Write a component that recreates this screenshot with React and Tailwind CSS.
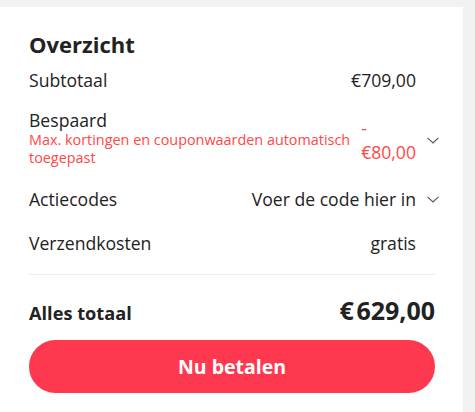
const font = { fontFamily: '"Open Sans", "Noto Sans", sans-serif' };

function Chevron() {
  return (
    <svg width="12" height="7" viewBox="0 0 12 7" fill="none" className="shrink-0 ml-[11px]">
      <path d="M0.5 0.8l5.5 5.2 5.5-5.2" stroke="#555" strokeWidth="1.1" />
    </svg>
  );
}

function Row({ label, value, chevron }) {
  return (
    <div className="flex items-center justify-between text-[17.6px] leading-[24px] text-[#222]">
      <span>{label}</span>
      <div className="flex items-center">
        <span>{value}</span>
        <span className="w-[19px] flex">{chevron && <Chevron />}</span>
      </div>
    </div>
  );
}

export default function App() {
  return (
    <div className="min-h-[412px] bg-[#f2f2f2] pt-[7px] pr-[12px]" style={font}>
      <div className="bg-white min-h-[405px] pl-[29px] pr-[28px] pt-[23px]">
        <h2 className="text-[22px] font-bold text-[#222] leading-[28px]">Overzicht</h2>

        <div className="mt-[10px]">
          <Row label="Subtotaal" value="€709,00" />
        </div>

        <div className="mt-[17px] flex items-start justify-between">
          <div className="flex-1 min-w-0">
            <div className="text-[17.6px] text-[#222] leading-[22px]">Bespaard</div>
            <div className="text-[14.4px] text-[#ff4747] leading-[18px]">
              Max. kortingen en couponwaarden automatisch toegepast
            </div>
          </div>
          <div className="flex items-center mt-[7px] shrink-0">
            <div className="text-[17.6px] text-[#ff4747] leading-[24px]">
              <div>-</div>
              <div>€80,00</div>
            </div>
            <span className="w-[19px] flex">
              <Chevron />
            </span>
          </div>
        </div>

        <div className="mt-[20px]">
          <Row label="Actiecodes" value="Voer de code hier in" chevron />
        </div>
        <div className="mt-[20px]">
          <Row label="Verzendkosten" value="gratis" />
        </div>

        <div className="mt-[19px] h-px bg-[#eeeeee]" />

        <div className="mt-[19px] h-[34px] flex items-baseline justify-between text-[#222]">
          <span className="text-[18.2px] leading-[32px] font-bold">Alles totaal</span>
          <span className="text-[25px] leading-[32px] font-bold">€&#8202;629,00</span>
        </div>

        <button className="mt-[12px] w-full h-[53px] rounded-full bg-[#fd384f] text-white text-[19.5px] font-bold">
          Nu betalen
        </button>
      </div>
    </div>
  );
}
